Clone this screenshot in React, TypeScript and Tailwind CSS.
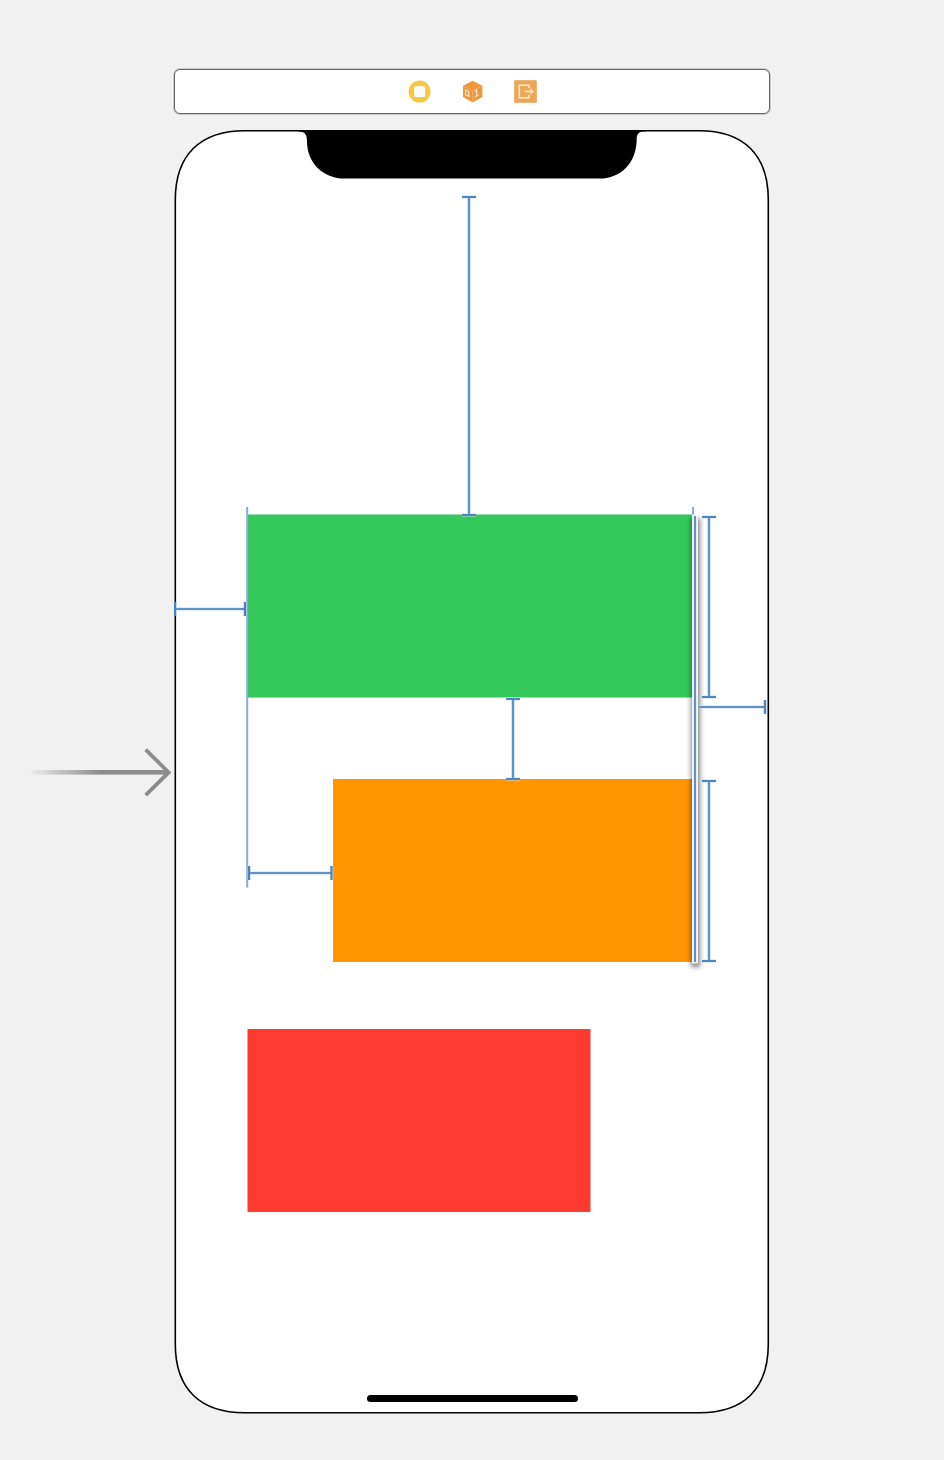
import React from "react";

type Span = { from: number; to: number; at: number };

const verticalSpans: Span[] = [
  { at: 469, from: 197, to: 515 },
  { at: 513, from: 699, to: 779 },
  { at: 709, from: 517, to: 697 },
  { at: 709, from: 781, to: 961 },
];

const horizontalSpans: Span[] = [
  { at: 609, from: 175, to: 245 },
  { at: 873, from: 249, to: 331.5 },
];

function VerticalSpan({ at, from, to }: Span) {
  const d = `M${at} ${from}V${to}`;
  const caps = `M${at - 7} ${from}h14M${at - 7} ${to}h14`;
  return (
    <g fill="none">
      <path d={d + caps} stroke="#c9dcf2" strokeOpacity="0.5" strokeWidth="4" />
      <path d={d} stroke="#5f92c8" strokeWidth="2.2" />
      <path d={caps} stroke="#4f86c2" strokeWidth="2.2" />
    </g>
  );
}

function HorizontalSpan({ at, from, to }: Span) {
  const d = `M${from} ${at}H${to}`;
  const caps = `M${from} ${at - 7}v14M${to} ${at - 7}v14`;
  return (
    <g fill="none">
      <path d={d + caps} stroke="#c9dcf2" strokeOpacity="0.5" strokeWidth="4" />
      <path d={d} stroke="#5f92c8" strokeWidth="2.2" />
      <path d={caps} stroke="#4a80bc" strokeWidth="2.2" />
    </g>
  );
}

function SceneDock() {
  return (
    <header className="flex h-[45px] w-[596px] items-center justify-center gap-[30px] self-center rounded-md border border-[#666666] bg-white shadow-[0_0_0_1px_rgba(90,90,90,0.25)]">
      <svg className="h-[23px] w-[23px]" viewBox="0 0 23 23" aria-hidden="true">
        <circle cx="11.6" cy="11.6" r="11" fill="#f7c843" />
        <rect x="6.2" y="6.2" width="10.9" height="10.9" rx="1.2" fill="white" />
      </svg>
      <svg className="h-[23px] w-[23px]" viewBox="0 0 23 23" aria-hidden="true">
        <path d="M11.6.8 21.4 5.8v11.3l-9.8 5.5L2 17.1V5.8z" fill="#ee983b" />
        <path d="m2.8 6.3 8.8 4.2 8.9-4.2M11.6 10.5v11" fill="none" stroke="#f4b46e" strokeWidth="0.8" />
        <path d="m4.6 10 3.2 1.4v4.8l-3.2-1.4zM13.8 11.2l1.9-1v5.7M13.8 16.8l3.8-1.7" fill="none" stroke="#fde0c0" strokeWidth="1.3" />
      </svg>
      <svg className="h-[23px] w-[23px]" viewBox="0 0 23 23" aria-hidden="true">
        <rect x="0.5" y="0.6" width="22" height="22" rx="0.6" fill="#eda656" stroke="#e99c4a" strokeWidth="0.6" />
        <path d="M15 8.2V5.2H5.3v12.6H15v-3" fill="none" stroke="#ffebd5" strokeWidth="1.5" />
        <path d="M10.8 11.5h7.5M16.3 9.3l2.7 2.2-2.7 2.2" fill="none" stroke="#ffebd5" strokeWidth="1.4" />
      </svg>
    </header>
  );
}

function EntryArrow() {
  return (
    <svg className="h-[52px] w-[144px] shrink-0 self-center" viewBox="30 746 144 52" aria-hidden="true">
      <defs>
        <linearGradient id="entry" gradientUnits="userSpaceOnUse" x1="31" y1="0" x2="101" y2="0">
          <stop offset="0" stopColor="#8b8b8b" stopOpacity="0.05" />
          <stop offset="1" stopColor="#8b8b8b" />
        </linearGradient>
      </defs>
      <rect x="31" y="770" width="138" height="4.6" fill="url(#entry)" />
      <path d="m145.7 749.7 23 22.7-23 22.7" fill="none" stroke="#8b8b8b" strokeWidth="3.8" />
    </svg>
  );
}

function Device() {
  return (
    <main className="relative flex h-[1286px] w-[596px] shrink-0 flex-col items-center justify-end pb-[13px]">
      <svg className="absolute inset-0 h-full w-full" viewBox="174 129 596 1286" aria-hidden="true">
        <path
          d="M245 130.8H699C744 130.8 768.3 155 768.3 200V1344C768.3 1389 744 1412.8 699 1412.8H245C200 1412.8 175.3 1389 175.3 1344V200C175.3 155 200 130.8 245 130.8Z"
          fill="white"
          stroke="black"
          strokeWidth="1.6"
        />
        <path
          d="M298 130H646V131.4H644C639 131.4 636.7 134 636.7 139C636.7 163 621 178.6 599 178.6H345C323 178.6 307 163 307 141C307 134 304.5 131.4 299 131.4H298Z"
          fill="black"
        />
      </svg>
      <div className="absolute top-[385px] left-[73px] h-[184px] w-[446px] border-y border-[#98e0aa] bg-[#35c85a]" />
      <div className="absolute top-[650px] left-[159px] h-[183px] w-[360px] bg-[#ff9500]" />
      <div className="absolute top-[900px] left-[73px] h-[183px] w-[344px] border-x border-[#ff9b96] bg-[#ff3b30]" />
      <div className="relative h-[7px] w-[211px] rounded-full bg-black" />
      <svg className="absolute inset-0 h-full w-full" viewBox="174 129 596 1286" aria-hidden="true">
        <defs>
          <filter id="lift" filterUnits="userSpaceOnUse" x="676" y="500" width="40" height="480">
            <feGaussianBlur stdDeviation="2.6" />
          </filter>
        </defs>
        <rect x="691" y="518" width="9" height="449" fill="black" fillOpacity="0.48" filter="url(#lift)" />
        {verticalSpans.map((s) => (
          <VerticalSpan key={`${s.at}-${s.from}`} {...s} />
        ))}
        <path d="M247.2 507V887.5M693 507V515" stroke="#84abdd" strokeWidth="2" />
        {horizontalSpans.map((s) => (
          <HorizontalSpan key={s.at} {...s} />
        ))}
        <rect x="692" y="514.5" width="6" height="449" rx="0.8" fill="#f3f5f8" />
        <path d="M695 516V962" stroke="#5f92c8" strokeWidth="2.2" />
        <g fill="none">
          <path d="M698.5 707H766M765 700v14" stroke="#c9dcf2" strokeOpacity="0.5" strokeWidth="4" />
          <path d="M698.5 707H766" stroke="#5f92c8" strokeWidth="2.2" />
          <path d="M765 700v14" stroke="#4f86c2" strokeWidth="2.2" />
        </g>
      </svg>
    </main>
  );
}

export default function App() {
  return (
    <div className="flex h-[1460px] w-[944px] flex-col gap-[15px] overflow-hidden bg-[#f1f1f1] pt-[69px]">
      <SceneDock />
      <div className="flex items-center pl-[30px]">
        <EntryArrow />
        <Device />
      </div>
    </div>
  );
}
